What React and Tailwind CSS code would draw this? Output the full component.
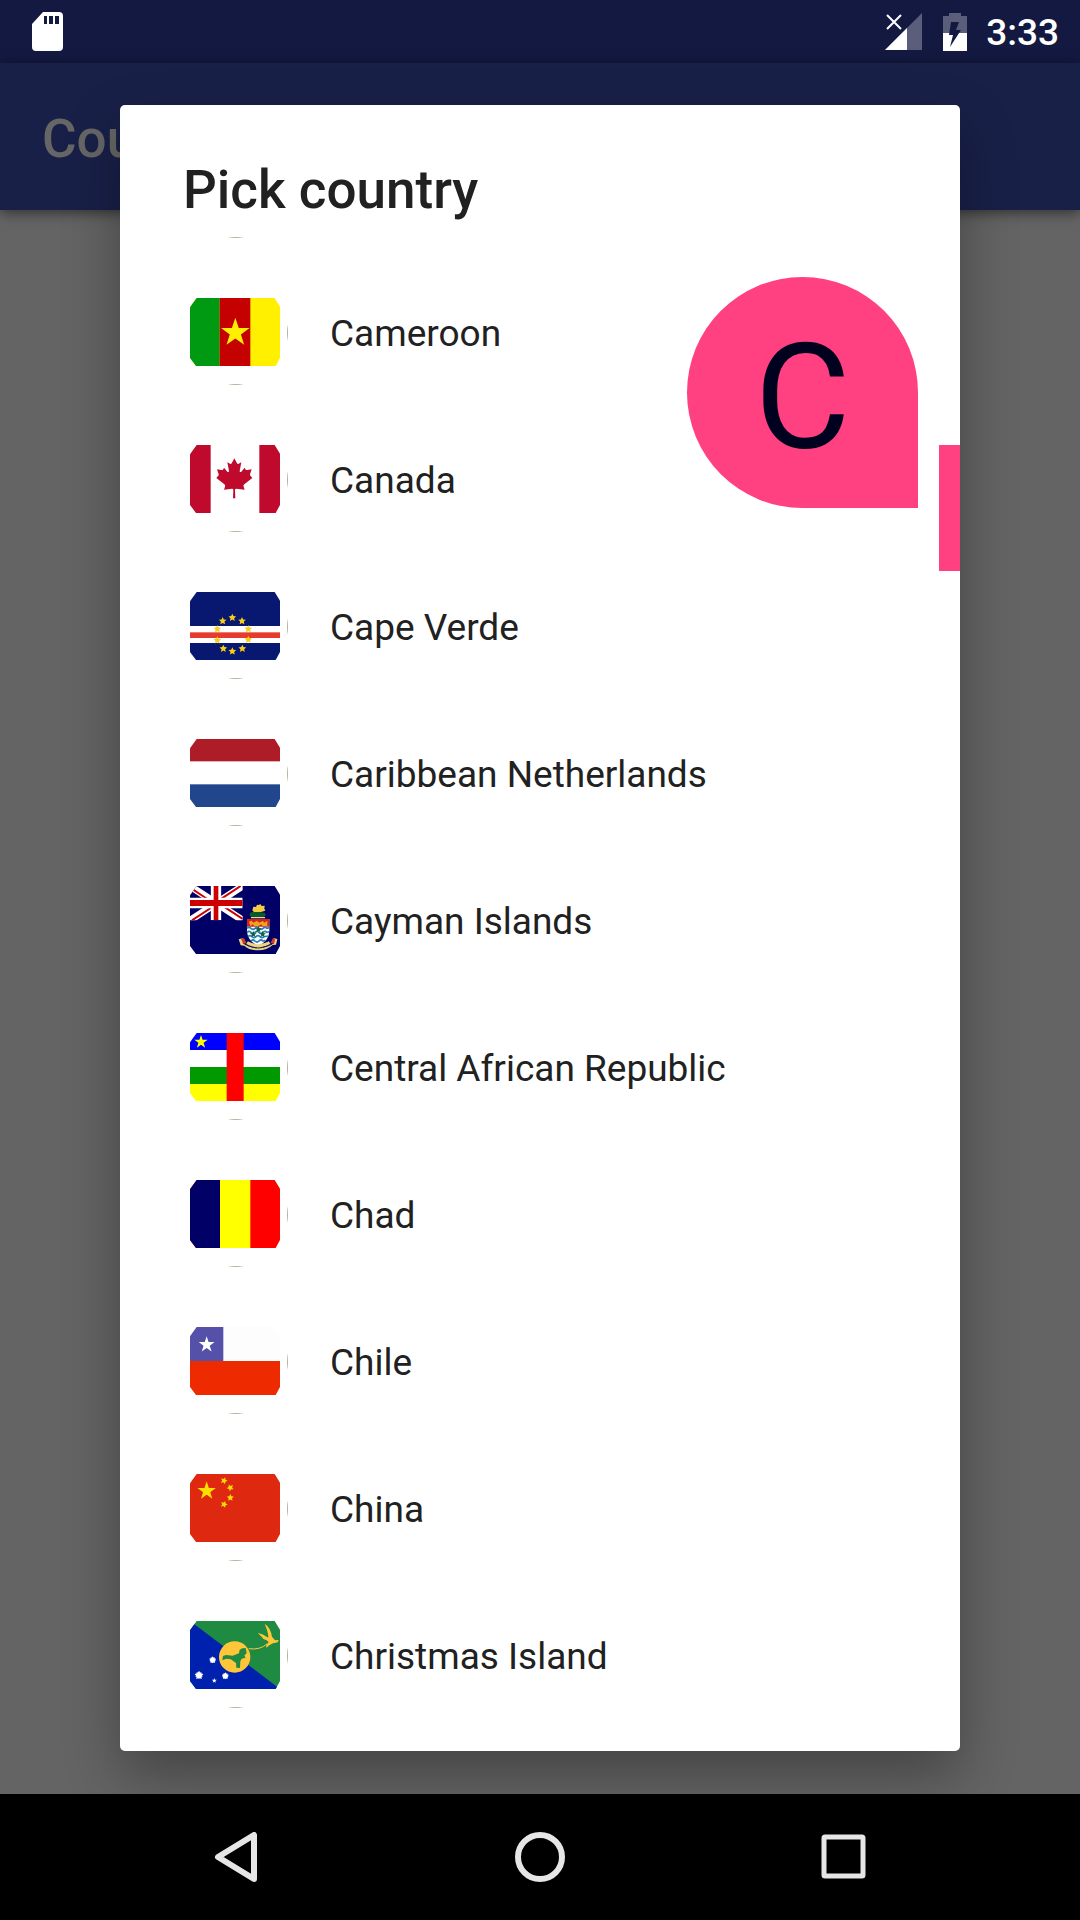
import React, { useId } from "react";

/* Five-pointed star centred on (x, y) with outer radius r. */
function Star({ x, y, r, fill, tilt = 0, inner = 0.39 }) {
  const points = Array.from({ length: 10 }, (_, i) => {
    const radius = i % 2 ? r * inner : r;
    const angle = ((i * 36 - 90 + tilt) * Math.PI) / 180;
    return `${(x + radius * Math.cos(angle)).toFixed(1)},${(y + radius * Math.sin(angle)).toFixed(1)}`;
  }).join(" ");
  return <polygon points={points} fill={fill} />;
}

/* Flags are drawn on a 270 x 204 canvas. */
const Cameroon = () => (
  <>
    <rect width="270" height="204" fill="#fff000" />
    <rect width="89" height="204" fill="#009a12" />
    <rect x="89" width="92" height="204" fill="#c40000" />
    <Star x={136} y={104} r={45} fill="#fff000" />
  </>
);

const Canada = () => (
  <>
    <rect width="270" height="204" fill="#fff" />
    <rect width="62" height="204" fill="#bf0a2e" />
    <rect x="208" width="62" height="204" fill="#bf0a2e" />
    <path
      fill="#bf0a2e"
      d="M133 40 L125 55 Q123 58 120 56 L112 52 L117 78 Q117 83 112 80 L102 68 L99 74 Q97 76 94 75 L81 73 L86 88 Q87 91 84 93 L79 99 L103 118 Q107 121 105 125 L102 134 L126 131 Q130 131 130 134 L129 160 H136 L135 134 Q135 131 139 131 L164 134 L161 125 Q159 121 163 118 L187 99 L182 93 Q179 91 180 88 L185 73 L172 75 Q169 76 167 74 L164 68 L154 80 Q149 83 149 78 L154 52 L146 56 Q143 58 141 55 Z"
    />
  </>
);

const capeVerdeStars = [
  [127, 77], [98, 87], [156, 87], [82, 111], [175, 111],
  [82, 145], [175, 143], [100, 170], [157, 170], [127, 178],
];

const CapeVerde = () => (
  <>
    <rect width="270" height="204" fill="#08176f" />
    <rect y="102" width="270" height="51" fill="#fff" />
    <rect y="121" width="270" height="17" fill="#e73c2d" />
    {capeVerdeStars.map(([x, y]) => (
      <Star key={`${x}-${y}`} x={x} y={y} r={12} inner={0.48} fill="#f7cf18" />
    ))}
  </>
);

const Netherlands = () => (
  <>
    <rect width="270" height="204" fill="#fff" />
    <rect width="270" height="67" fill="#ae1c28" />
    <rect y="136" width="270" height="68" fill="#21468b" />
  </>
);

const Cayman = () => {
  const jack = useId();
  return (
    <>
      <rect width="270" height="204" fill="#000066" />
      <clipPath id={jack}>
        <rect width="158" height="103" />
      </clipPath>
      <g clipPath={`url(#${jack})`}>
        <path d="M0 0 L158 103 M158 0 L0 103" stroke="#fff" strokeWidth="21" />
        <path d="M0 5 L70 51 M152 0 L82 46 M6 103 L76 57 M158 99 L88 53" stroke="#cc0000" strokeWidth="6" />
        <path d="M78 0 V103 M0 51 H158" stroke="#fff" strokeWidth="31" />
        <path d="M78 0 V103" stroke="#cc0000" strokeWidth="14" />
        <path d="M0 51 H158" stroke="#cc0000" strokeWidth="18" />
      </g>
      <path d="M180 90 Q176 80 187 78 Q192 74 200 78 L208 76 L216 80 Q230 78 226 90 L215 96 H190 Z" fill="#0b5a2a" />
      <path d="M187 73 L190 62 L198 63 L201 56 L207 57 L211 54 L215 60 L224 59 L223 68 L226 74 L213 78 H192 Z" fill="#f3cb45" />
      <path d="M183 95 H225" stroke="#e8d9a0" strokeWidth="4" />
      <path d="M171 99 H238 V135 Q237 164 205 180 Q172 164 171 135 Z" fill="#fff" />
      <path d="M171 99 H238 V122 H171 Z" fill="#d6201c" />
      <path d="M177 107 L185 104 L190 110 L201 104 L207 110 L219 105 L223 110 L232 104 V120 H218 L213 115 L206 120 H193 L188 115 L181 120 Z" fill="#f0a519" />
      <path d="M171 127 Q177 121 183 127 T195 127 T207 127 T219 127 T231 127 L238 125 M171 139 Q177 133 183 139 T195 139 T207 139 T219 139 T231 139 L237 137 M174 152 Q180 146 186 152 T198 152 T210 152 T222 152 L234 150 M183 165 Q189 159 195 165 T207 165 T219 165 L226 163" fill="none" stroke="#2582ba" strokeWidth="5" />
      <Star x={205} y={130} r={11} fill="#145c32" />
      <Star x={190} y={145} r={11} fill="#145c32" />
      <Star x={218} y={145} r={11} fill="#145c32" />
      <path d="M146 160 L157 157 L161 164 L158 172 Q181 188 205 187 Q233 186 252 172 L248 163 L253 156 L262 160 L258 176 L248 177 Q231 193 205 193 Q177 193 163 179 L152 178 Z" fill="#ecd486" />
      <path d="M153 158 L162 156 L169 171 L160 174 Z M249 156 L256 158 L252 174 L242 170 Z" fill="#d33a2b" />
      <path d="M171 170 Q187 179 205 180 Q223 179 239 170" fill="none" stroke="#ecd486" strokeWidth="10" />
      <path d="M166 173 Q183 185 205 186 Q226 185 244 173" fill="none" stroke="#3d391f" strokeWidth="3" strokeDasharray="5 3" />
    </>
  );
};

const CentralAfrica = () => (
  <>
    <rect width="270" height="51" fill="#0000ff" />
    <rect y="51" width="270" height="51" fill="#fff" />
    <rect y="102" width="270" height="51" fill="#009a00" />
    <rect y="153" width="270" height="51" fill="#ffff00" />
    <rect x="110" width="51" height="204" fill="#ff0000" />
    <Star x={33} y={27} r={21} fill="#ffff00" />
  </>
);

const Chad = () => (
  <>
    <rect width="270" height="204" fill="#ff0000" />
    <rect width="90" height="204" fill="#000066" />
    <rect x="90" width="91" height="204" fill="#ffff00" />
  </>
);

const Chile = () => (
  <>
    <rect width="270" height="204" fill="#fdfdfd" />
    <rect width="100" height="102" fill="#5550a8" />
    <rect y="102" width="270" height="102" fill="#ee2a00" />
    <Star x={50} y={53} r={25} fill="#fff" />
  </>
);

const China = () => (
  <>
    <rect width="270" height="204" fill="#de2910" />
    <Star x={50} y={51} r={29} fill="#ffde00" />
    <Star x={102} y={20} r={11} inner={0.48} fill="#ffde00" tilt={20} />
    <Star x={121} y={41} r={11} inner={0.48} fill="#ffde00" tilt={45} />
    <Star x={121} y={71} r={11} inner={0.48} fill="#ffde00" />
    <Star x={102} y={91} r={11} inner={0.48} fill="#ffde00" tilt={20} />
  </>
);

const ChristmasIsland = () => (
  <>
    <rect width="270" height="204" fill="#1f8a42" />
    <path d="M0 0 L270 204 H0 Z" fill="#0021ad" />
    <circle cx="134" cy="108" r="47" fill="#ffc639" />
    <path d="M97 118 L99 105 L108 102 L128 104 L147 97 L149 86 L157 82 L167 81 L170 96 L163 104 L167 110 L155 113 L151 121 L150 141 L139 140 L138 126 L122 115 L109 113 Z" fill="#1f8a42" />
    <path d="M176 83 Q210 88 232 68" fill="none" stroke="#ffc639" strokeWidth="3" />
    <path d="M224 9 Q232 12 238 23 Q245 36 246 47 L255 58 L266 57 L263 64 L249 67 Q236 72 230 80 L228 75 L236 63 L230 58 Q219 56 215 47 L203 36 L217 40 L230 47 L235 50 Q235 33 224 9 Z" fill="#ffc639" />
    <Star x={68} y={117} r={11} inner={0.6} fill="#fff" />
    <Star x={68} y={117} r={10} inner={0.6} fill="#fff" tilt={36} />
    <Star x={27} y={163} r={14} inner={0.55} fill="#fff" />
    <Star x={27} y={163} r={12} inner={0.55} fill="#fff" tilt={36} />
    <Star x={106} y={165} r={11} inner={0.6} fill="#fff" />
    <Star x={106} y={165} r={10} inner={0.6} fill="#fff" tilt={36} />
    <Star x={73} y={179} r={8} fill="#fff" />
  </>
);

const countries = [
  { name: "Cameroon", Flag: Cameroon },
  { name: "Canada", Flag: Canada },
  { name: "Cape Verde", Flag: CapeVerde },
  { name: "Caribbean Netherlands", Flag: Netherlands },
  { name: "Cayman Islands", Flag: Cayman },
  { name: "Central African Republic", Flag: CentralAfrica },
  { name: "Chad", Flag: Chad },
  { name: "Chile", Flag: Chile },
  { name: "China", Flag: China },
  { name: "Christmas Island", Flag: ChristmasIsland },
];

/* Round avatar: the flag plus slivers of its ring at the right and bottom. */
function Avatar({ children }) {
  const shape = useId();
  return (
    <svg className="size-[105px] shrink-0" viewBox="0 0 315 315" aria-hidden="true">
      <clipPath id={shape}>
        <polygon points="20,0 254,0 270,26 270,180 257,204 18,204 0,180 0,28" />
      </clipPath>
      <g transform="translate(21 54)" clipPath={`url(#${shape})`}>
        {children}
      </g>
      <path d="M134 312 H182 Q158 318 134 312 Z" fill="#b8b09c" />
      <path d="M312 133 V183 Q318 158 312 133 Z" fill="#b8b09c" />
    </svg>
  );
}

function StatusBar() {
  return (
    <header className="flex h-[63px] items-center bg-[#131940] pl-8 pr-[21px] text-white">
      <svg className="h-[39px] w-[31px]" viewBox="0 0 31 39" aria-label="SD card">
        <path
          fill="#fff"
          fillRule="evenodd"
          d="M11 0 H27 Q31 0 31 4 V35 Q31 39 27 39 H4 Q0 39 0 35 V12 Z M12 4 V12 H15 V4 Z M17 4 V12 H21 V4 Z M23 4 V12 H27 V4 Z"
        />
      </svg>
      <svg className="ml-auto h-[37px] w-[37px]" viewBox="0 0 37 37" aria-label="No signal">
        <path d="M37 0 V37 H0 Z" fill="#5b5e7a" />
        <path d="M22 15 V37 H0 Z" fill="#fff" />
        <path d="M2 2 L16 16 M16 2 L2 16" stroke="#fff" strokeWidth="2" />
      </svg>
      <svg className="ml-[21px] h-[38px] w-6" viewBox="0 0 24 38" aria-label="Battery charging">
        <path d="M6 0 H18 V3 H24 V20 H0 V3 H6 Z" fill="#5b5e7a" />
        <path d="M0 20 H24 V38 H0 Z" fill="#fff" />
        <path d="M8 9 H16 L13 17 H18 L7 34 L10 22 H6 Z" fill="#131940" />
      </svg>
      <time className="ml-[19px] pt-[3px] text-[37px] font-medium leading-[42px]">3:33</time>
    </header>
  );
}

function NavBar() {
  const button = "flex size-16 items-center justify-center";
  return (
    <nav className="flex h-[126px] items-center justify-center gap-60 bg-black">
      <button className={button} aria-label="Back">
        <svg className="size-[50px]" viewBox="0 0 50 50">
          <path d="M43 3 V47 L7 25 Z" fill="none" stroke="#e6e6e6" strokeWidth="6" strokeLinejoin="round" />
        </svg>
      </button>
      <button className={button} aria-label="Home">
        <svg className="size-[50px]" viewBox="0 0 50 50">
          <circle cx="25" cy="25" r="22" fill="none" stroke="#e6e6e6" strokeWidth="6" />
        </svg>
      </button>
      <button className={button} aria-label="Recent apps">
        <svg className="size-[50px]" viewBox="0 0 50 50">
          <rect x="5" y="5" width="39" height="39" rx="1" fill="none" stroke="#e6e6e6" strokeWidth="5" />
        </svg>
      </button>
    </nav>
  );
}

export default function App() {
  return (
    <div className="grid min-h-screen bg-[#646464] font-[Roboto,sans-serif]">
      <div className="col-start-1 row-start-1 flex flex-col">
        <StatusBar />
        <div className="flex h-[147px] items-center bg-[#192048] px-[42px] pt-[5px] shadow-[0_3px_12px_rgba(0,0,0,0.5)]">
          <h1 className="text-[53px] font-medium leading-[63px] text-[#666666]">Cou</h1>
        </div>
        <main className="flex-1" />
        <NavBar />
      </div>

      <div className="z-10 col-start-1 row-start-1 mb-[169px] mt-[105px] self-start px-[120px]">
        <section
          role="dialog"
          aria-labelledby="dialog-title"
          className="relative rounded-[5px] bg-white pb-[22px] text-[#212121] shadow-[0_24px_56px_rgba(0,0,0,0.32)]"
        >
          <h2 id="dialog-title" className="h-[132px] px-[63px] pt-[54px] text-[53px] font-medium leading-[63px]">
            Pick country
          </h2>
          <svg className="ml-[63px] h-[22px] w-[105px]" viewBox="0 0 315 66" aria-hidden="true">
            <path d="M134 0 H182 Q158 6 134 0 Z" fill="#b8b09c" />
          </svg>
          <ul>
            {countries.map(({ name, Flag }) => (
              <li key={name}>
                <button className="flex h-[147px] w-full items-center gap-[42px] px-[63px] text-left text-[37px] leading-[44px]">
                  <Avatar>
                    <Flag />
                  </Avatar>
                  <span className="pt-[3px]">{name}</span>
                </button>
              </li>
            ))}
          </ul>

          {/* Fast-scroll letter bubble and thumb */}
          <div className="absolute right-[42px] top-[172px] flex size-[231px] items-center justify-center rounded-full rounded-br-none bg-[#ff4081] pt-3 text-[147px] leading-none text-[#00001f]">
            C
          </div>
          <div className="absolute right-0 top-[340px] h-[126px] w-[21px] bg-[#ff4081]" />
        </section>
      </div>
    </div>
  );
}
